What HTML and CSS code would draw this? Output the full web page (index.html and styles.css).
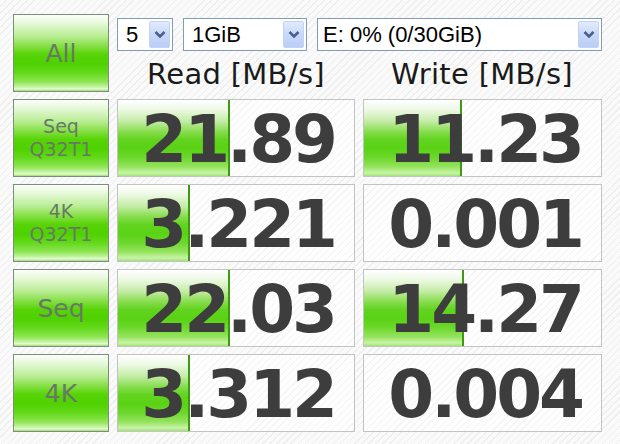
FILE: index.html
```html
<!DOCTYPE html>
<html>
<head>
<meta charset="utf-8">
<link rel="stylesheet" href="styles.css">
</head>
<body>
<div class="app">
  <div class="top">
    <div class="btn big">All</div>
    <div class="controls">
      <div class="selects">
        <div class="sel s1"><span class="val">5</span><span class="arr"><svg width="12" height="9" viewBox="0 0 12 9"><path d="M1.5 2 L6 6.5 L10.5 2" fill="none" stroke="#4a5f8a" stroke-width="2.6"/></svg></span></div>
        <div class="sel s2"><span class="val">1GiB</span><span class="arr"><svg width="12" height="9" viewBox="0 0 12 9"><path d="M1.5 2 L6 6.5 L10.5 2" fill="none" stroke="#4a5f8a" stroke-width="2.6"/></svg></span></div>
        <div class="sel s3"><span class="val">E: 0% (0/30GiB)</span><span class="arr"><svg width="12" height="9" viewBox="0 0 12 9"><path d="M1.5 2 L6 6.5 L10.5 2" fill="none" stroke="#4a5f8a" stroke-width="2.6"/></svg></span></div>
      </div>
      <div class="heads">
        <div class="head">Read [MB/s]</div>
        <div class="head">Write [MB/s]</div>
      </div>
    </div>
  </div>
  <div class="grid">
    <div class="btn two">Seq<br>Q32T1</div>
    <div class="cell"><div class="bar" style="width:110px"></div><span class="num">21.89</span></div>
    <div class="cell"><div class="bar" style="width:96px"></div><span class="num">11.23</span></div>

    <div class="btn two">4K<br>Q32T1</div>
    <div class="cell"><div class="bar" style="width:70px"></div><span class="num">3.221</span></div>
    <div class="cell"><span class="num">0.001</span></div>

    <div class="btn big">Seq</div>
    <div class="cell"><div class="bar" style="width:110px"></div><span class="num">22.03</span></div>
    <div class="cell"><div class="bar" style="width:98px"></div><span class="num">14.27</span></div>

    <div class="btn big">4K</div>
    <div class="cell"><div class="bar" style="width:70px"></div><span class="num">3.312</span></div>
    <div class="cell"><span class="num">0.004</span></div>
  </div>
</div>
</body>
</html>
```
FILE: styles.css
```css
html, body {
  margin: 0;
  padding: 0;
}
body {
  width: 620px;
  height: 444px;
  overflow: hidden;
  background-color: #f8f8f8;
  background-image: repeating-linear-gradient(135deg, #fafafa 0px, #fafafa 4px, #eeeeee 4px, #eeeeee 5px);
  font-family: "DejaVu Sans", Verdana, sans-serif;
}
.app {
  padding: 14px 0 0 13px;
}
.top {
  display: flex;
  gap: 8px;
  height: 78px;
}
.btn {
  box-sizing: border-box;
  width: 96px;
  height: 78px;
  border: 1px solid #7d8d7d;
  background: linear-gradient(to bottom,
    #fcfefa 0%, #e8f9dc 10%, #b9ed94 28%, #80de3e 42%, #57d406 52%,
    #4fd100 64%, #63d91a 76%, #8ee654 88%, #c8f5a6 95%, #e6fbd6 97%, #9fe070 100%);
  color: #687868;
  display: flex;
  align-items: center;
  justify-content: center;
  text-align: center;
}
.big {
  font-size: 25px;
}
.two {
  font-size: 19px;
  line-height: 23px;
}
.controls {
  display: flex;
  flex-direction: column;
  width: 485px;
}
.selects {
  display: flex;
  margin-top: 4px;
  height: 33px;
}
.sel {
  box-sizing: border-box;
  height: 33px;
  border: 1px solid #7f9db9;
  background: #fff;
  display: flex;
  align-items: center;
  justify-content: space-between;
  padding: 2px 2px 2px 8px;
  font-family: "Liberation Sans", Arial, sans-serif;
  font-size: 22px;
  color: #000;
}
.s1 { width: 56px; }
.s2 { width: 124px; margin-left: 10px; }
.s3 { width: 285px; margin-left: 10px; padding-left: 5px; }
.arr {
  box-sizing: border-box;
  width: 21px;
  height: 27px;
  border: 1px solid #c3d3f3;
  border-radius: 2px;
  background: linear-gradient(to bottom, #e2ebfd 0%, #cbdafb 45%, #b9cdf7 100%);
  display: flex;
  align-items: center;
  justify-content: center;
}
.val {
  line-height: 28px;
}
.heads {
  display: flex;
  gap: 8px;
  margin-top: 5px;
}
.head {
  width: 238px;
  text-align: center;
  font-size: 29px;
  line-height: 36px;
  color: #1a1a1a;
  letter-spacing: 0.3px;
}
.grid {
  display: grid;
  grid-template-columns: 96px 238px 239px;
  grid-auto-rows: 78px;
  column-gap: 8px;
  row-gap: 7px;
  margin-top: 7px;
}
.cell {
  box-sizing: border-box;
  position: relative;
  border: 1px solid #c3c3c3;
  background-color: #fdfdfd;
  background-image: repeating-linear-gradient(135deg, #fefefe 0px, #fefefe 4px, #f4f4f4 4px, #f4f4f4 5px);
  display: flex;
  align-items: center;
  justify-content: flex-end;
  padding-right: 19px;
  overflow: hidden;
}
.bar {
  position: absolute;
  left: 0;
  top: 0;
  bottom: 0;
  border-right: 2px solid #3d9a12;
  background: linear-gradient(to bottom,
    #ffffff 0%, #eef9e6 12%, #c4eca6 28%, #86dc4c 42%, #62d420 52%,
    #5ad214 64%, #6cd82c 76%, #95e35e 88%, #c8f3a8 96%, #9fe474 100%);
}
.num {
  position: relative;
  font-weight: bold;
  font-size: 66px;
  letter-spacing: -3px;
  color: #3d3d3d;
  line-height: 70px;
  margin-top: 4px;
}
```
